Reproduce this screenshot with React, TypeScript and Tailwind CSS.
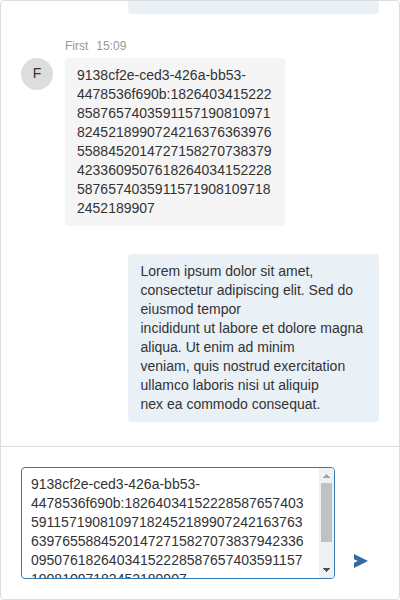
import React from 'react';

const received = [
  '9138cf2e-ced3-426a-bb53-',
  '4478536f690b:1826403415222',
  '8587657403591157190810971',
  '8245218990724216376363976',
  '5588452014727158270738379',
  '4233609507618264034152228',
  '5876574035911571908109718',
  '2452189907',
].join('\n');

const sent = [
  'Lorem ipsum dolor sit amet,',
  'consectetur adipiscing elit. Sed do',
  'eiusmod tempor',
  'incididunt ut labore et dolore magna',
  'aliqua. Ut enim ad minim',
  'veniam, quis nostrud exercitation',
  'ullamco laboris nisi ut aliquip',
  'nex ea commodo consequat.',
].join('\n');

const draft = [
  '9138cf2e-ced3-426a-bb53-',
  '4478536f690b:18264034152228587657403',
  '59115719081097182452189907242163763',
  '63976558845201472715827073837942336',
  '09507618264034152228587657403591157',
  '19081097182452189907',
].join('\n');

function Scrollbar() {
  return (
    <div className="flex w-[15px] shrink-0 flex-col items-center bg-[#f1f1f1]">
      <svg className="h-[15px] w-[15px] shrink-0" viewBox="0 0 15 15" shapeRendering="crispEdges">
        <path d="M7 6h1v1h1v1h1v1h1v1H4V9h1V8h1V7h1z" fill="#a3a3a3" />
      </svg>
      <div className="h-[59px] w-[11px] bg-[#c1c1c1]" />
      <svg className="mt-auto h-[15px] w-[15px] shrink-0" viewBox="0 0 15 15" shapeRendering="crispEdges">
        <path d="M4 5h7v1h-1v1H9v1H8v1H7V8H6V7H5V6H4z" fill="#505050" />
      </svg>
    </div>
  );
}

export default function App() {
  return (
    <div className="flex h-[600px] w-[400px] flex-col overflow-hidden rounded-[4px] border border-[#dddddd] bg-white font-['Liberation_Sans',Arial,sans-serif] text-[14px] leading-[19px] text-[#333333]">
      <main className="flex h-[445px] shrink-0 flex-col overflow-hidden px-5">
        <div className="h-[13px] w-[251px] shrink-0 self-end rounded-b-[4px] bg-[#e9f0f6]" />

        <div className="mt-[25px] flex h-[15px] shrink-0 gap-2 pl-11 text-[12px] leading-[15px] text-[#999999]">
          <span>First</span>
          <span>15:09</span>
        </div>
        <div className="mt-1 flex shrink-0 items-start gap-3">
          <div className="flex h-8 w-8 items-center justify-center rounded-full bg-[#dddddd] pb-px">F</div>
          <div className="w-[220px] whitespace-pre rounded-[4px] bg-[#f5f5f5] px-3 py-2">{received}</div>
        </div>

        <div className="mt-7 w-[251px] shrink-0 self-end whitespace-pre rounded-[4px] bg-[#e9f0f6] py-2 pl-[12.5px]">
          {sent}
        </div>
      </main>

      <footer className="flex flex-1 items-end border-t border-[#dddddd] px-5 pb-5">
        <div className="flex h-[112px] w-[314px] overflow-hidden rounded-[4px] border border-[#337ab7]">
          <div className="min-w-0 flex-1 overflow-hidden whitespace-pre pl-[9px] pt-[7px]">{draft}</div>
          <Scrollbar />
        </div>
        <button aria-label="Send" className="mb-[11px] ml-[19px] h-[14px] w-[14px]">
          <svg className="block h-[14px] w-[14px]" viewBox="0 0 14 14">
            <path d="M0 0L14 7L0 14V8.8L3.8 7L0 5.2Z" fill="#2e6da4" />
          </svg>
        </button>
      </footer>
    </div>
  );
}
